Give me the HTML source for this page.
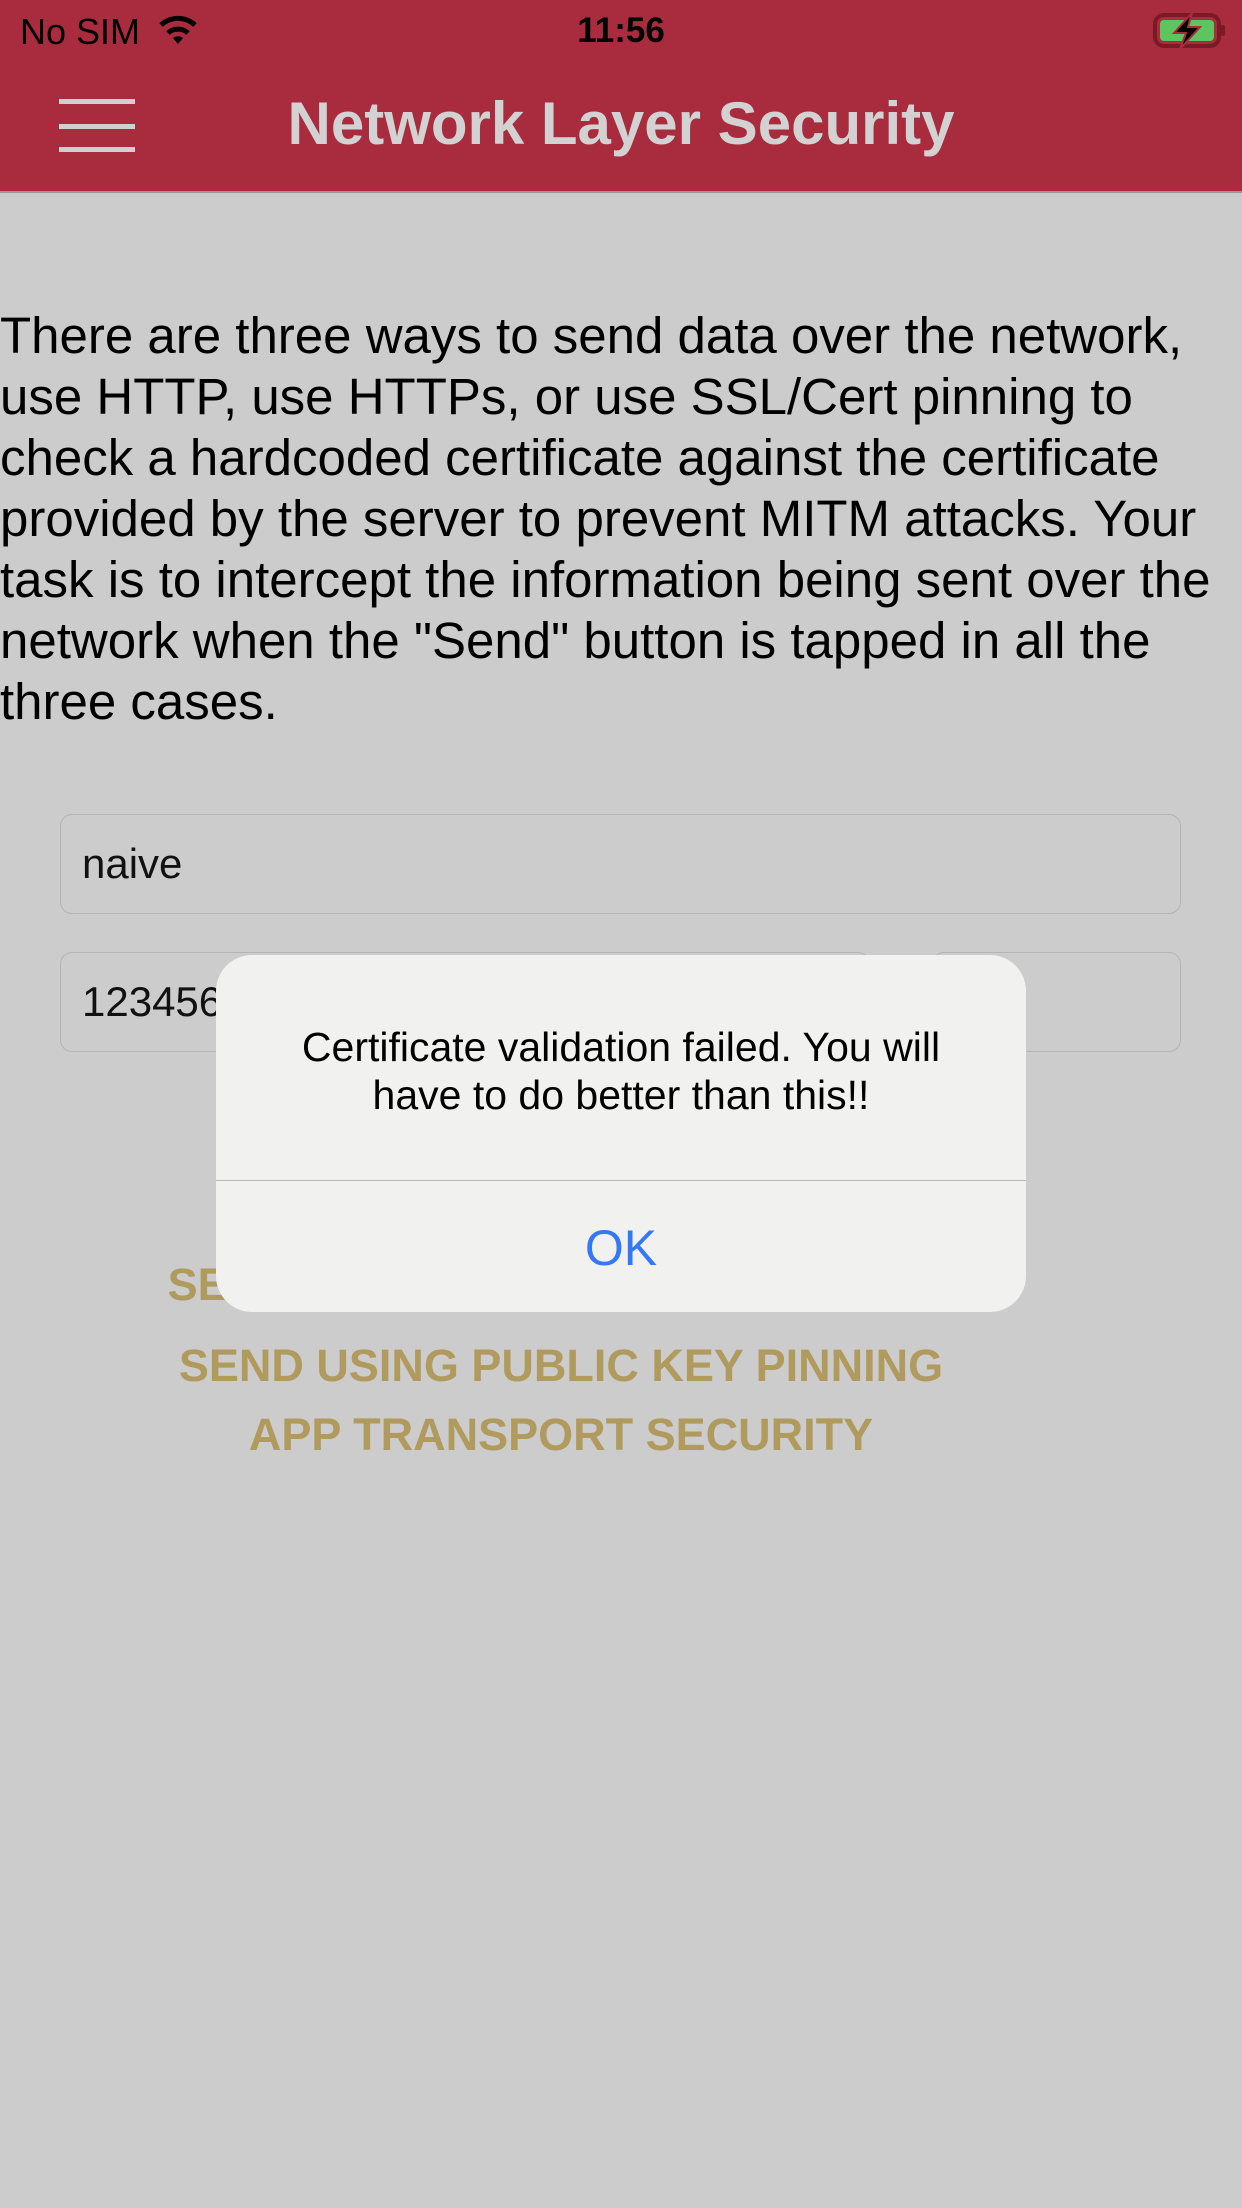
<!DOCTYPE html>
<html><head><meta charset="utf-8"><style>
body{margin:0;width:1242px;height:2208px;background:#cccccc;position:relative;overflow:hidden;font-family:"Liberation Sans",Helvetica,Arial,sans-serif;}
.nav{position:absolute;left:0;top:0;width:1242px;height:191px;background:#a82c3e;border-bottom:2px solid #999;}
.abs{position:absolute;white-space:nowrap;}
.bar{position:absolute;left:59px;width:76px;height:5px;background:#d0d0d0;}
.body{position:absolute;left:0;top:305px;font-size:51px;line-height:61px;color:#000;white-space:nowrap;letter-spacing:0px;}
.field{position:absolute;border:1.5px solid #b4b4b4;border-radius:12px;box-sizing:border-box;font-size:42px;line-height:97px;padding-left:21px;color:#111;}
.btn{position:absolute;left:0;width:1122px;text-align:center;font-weight:bold;color:#b09a5e;font-size:45px;}
.alert{position:absolute;left:216px;top:955px;width:810px;height:357px;background:#f1f1ef;border-radius:36px;overflow:hidden;}
</style></head><body>
<div class="nav">
 <div class="abs" style="left:20px;top:11px;font-size:36px;color:#000;">No SIM</div>
 <svg class="abs" style="left:156px;top:14px" width="44" height="32" viewBox="0 0 44 32"><path d="M22 30 L17 24 A8 8 0 0 1 27 24 Z" fill="#000"/><path d="M12 19 A15 15 0 0 1 32 19" stroke="#000" stroke-width="5" fill="none"/><path d="M5 11 A25 25 0 0 1 39 11" stroke="#000" stroke-width="5" fill="none"/></svg>
 <div class="abs" style="left:0;width:1242px;text-align:center;top:11px;font-size:35px;font-weight:bold;color:#000;">11:56</div>
 <svg class="abs" style="left:1150px;top:12px" width="80" height="38" viewBox="0 0 80 38"><rect x="5" y="3" width="64" height="31" rx="9" fill="none" stroke="#7a1a26" stroke-width="4"/><rect x="10" y="8" width="54" height="21" rx="4" fill="#5ec45e"/><rect x="71" y="13" width="4" height="11" rx="2" fill="#7a1a26"/><path d="M42 1 L24 21 H36 L30 37 L50 15 H38 Z" fill="#000" stroke="#a82c3e" stroke-width="2"/></svg>
 <div class="bar" style="top:99px"></div><div class="bar" style="top:124px"></div><div class="bar" style="top:147px"></div>
 <div class="abs" style="left:0;width:1242px;text-align:center;top:89px;font-size:60px;font-weight:bold;color:#d2d2d2;">Network Layer Security</div>
</div>
<div class="body">There are three ways to send data over the network,<br>use HTTP, use HTTPs, or use SSL/Cert pinning to<br>check a hardcoded certificate against the certificate<br>provided by the server to prevent MITM attacks. Your<br>task is to intercept the information being sent over the<br>network when the "Send" button is tapped in all the<br>three cases.</div>
<div class="field" style="left:60px;top:814px;width:1121px;height:100px;">naive</div>
<div class="field" style="left:60px;top:952px;width:810px;height:100px;">123456</div>
<div class="field" style="left:932px;top:952px;width:249px;height:100px;">0</div>
<div class="btn" style="top:1259px;">SEND USING CERTIFICATE PINNING</div>
<div class="btn" style="top:1340px;">SEND USING PUBLIC KEY PINNING</div>
<div class="btn" style="top:1409px;">APP TRANSPORT SECURITY</div>
<div class="alert">
 <div class="abs" style="left:0;width:810px;text-align:center;top:68px;font-size:41px;line-height:48px;color:#000;">Certificate validation failed. You will<br>have to do better than this!!</div>
 <div class="abs" style="left:0;top:225px;width:810px;height:1px;background:#b8b8b8;"></div>
 <div class="abs" style="left:0;width:810px;text-align:center;top:264px;font-size:50px;color:#3478f6;">OK</div>
</div>
</body></html>
